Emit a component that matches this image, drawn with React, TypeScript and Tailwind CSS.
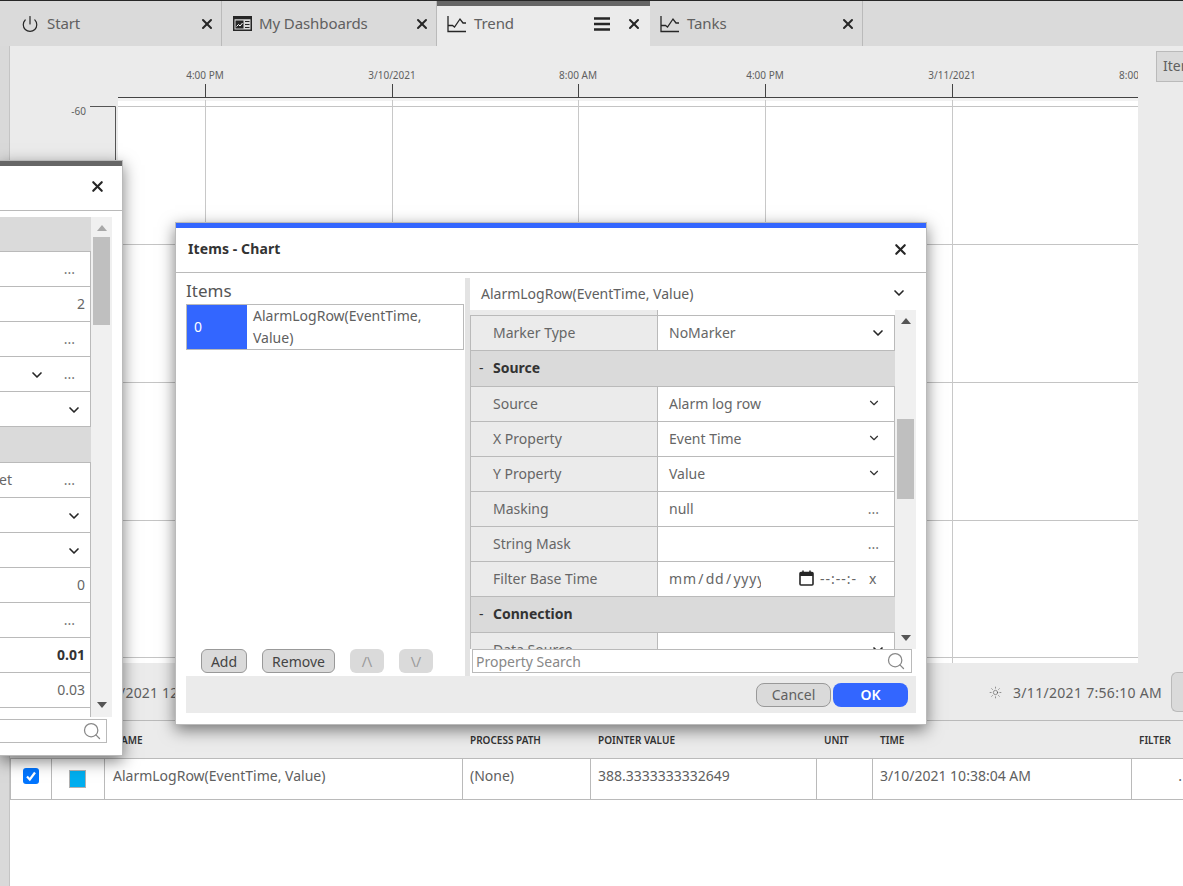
import { Power, X, ChevronDown, Search, Sun } from 'lucide-react';

const tabs = [
  { label: 'Start', icon: 'power', width: 'w-[222px]' },
  { label: 'My Dashboards', icon: 'dash', width: 'w-[215px]' },
  { label: 'Trend', icon: 'trend', width: 'w-[213px]', active: true },
  { label: 'Tanks', icon: 'trend', width: 'w-[213px]' },
];

const ticks = [
  { x: 205, label: '4:00 PM' },
  { x: 392, label: '3/10/2021' },
  { x: 578, label: '8:00 AM' },
  { x: 765, label: '4:00 PM' },
  { x: 952, label: '3/11/2021' },
  { x: 1138, label: '8:00 AM' },
];

const gridLines = [106, 244, 382, 520, 657];

const sidePanelRows = [
  { kind: 'section', height: 'h-[35px]' },
  { kind: 'dots' },
  { kind: 'text', value: '2' },
  { kind: 'dots' },
  { kind: 'chevronDots' },
  { kind: 'chevron' },
  { kind: 'section', height: 'h-[36px]' },
  { kind: 'dots', left: 'et' },
  { kind: 'chevron' },
  { kind: 'chevron' },
  { kind: 'text', value: '0' },
  { kind: 'dots' },
  { kind: 'bold', value: '0.01' },
  { kind: 'text', value: '0.03' },
  { kind: 'empty' },
];

function TrendIcon() {
  return (
    <svg width="20" height="18" viewBox="0 0 20 18" fill="none" stroke="#262626" strokeWidth="1.3">
      <path d="M1 1v15.500h18" />
      <path d="M1 10.500h4.500l2 1.500L13 4l3 4h3" />
    </svg>
  );
}

function DashIcon() {
  return (
    <svg width="19" height="15" viewBox="0 0 19 15" fill="none" stroke="#262626">
      <rect x="0.750" y="0.750" width="17.500" height="13.500" strokeWidth="1.500" />
      <rect x="0.750" y="0.750" width="17.500" height="2.500" fill="#262626" stroke="none" />
      <rect x="2.500" y="4.500" width="8" height="8" fill="#262626" stroke="none" />
      <path d="M3.500 10.500l2-2 1.500 1.500 2.500-3" stroke="#ffffff" strokeWidth="1" />
      <path d="M12 5.500h4.500M12 8.500h4.500M12 11.500h4.500" strokeWidth="1" />
    </svg>
  );
}

function TabBar() {
  return (
    <div className="h-[46px] flex bg-[#dadada] border-t border-[#262626] shrink-0">
      {tabs.map((tab) => (
        <div
          key={tab.label}
          className={`${tab.width} relative flex items-center pl-[20px] ${tab.active ? 'pr-[8px] bg-[#ebebeb]' : 'pr-[6px] border-r border-[#bababa]'}`}
        >
          {tab.active && <div className="absolute left-0 right-0 top-0 h-[5px] bg-[#666666]" />}
          <span className={`flex w-[20px] justify-center ${tab.icon === 'power' ? '' : '-ml-[10px]'} `}>
            {tab.icon === 'power' && <Power size={18} strokeWidth={1.6} color="#262626" />}
            {tab.icon === 'dash' && <DashIcon />}
            {tab.icon === 'trend' && <TrendIcon />}
          </span>
          <span className="ml-[7px] text-[15px] tracking-[-0.1px] text-[#606060] flex-1">{tab.label}</span>
          {tab.active && (
            <svg width="16" height="14" viewBox="0 0 16 14" className="mr-[16px]">
              <path d="M0 1.500h16M0 7h16M0 12.500h16" stroke="#262626" strokeWidth="2.400" />
            </svg>
          )}
          <X size={16} strokeWidth={3} color="#262626" />
        </div>
      ))}
    </div>
  );
}

function Chart() {
  return (
    <div className="flex-1 overflow-hidden">
      <svg width="1128" height="617" viewBox="10 46 1128 617">
        <rect x="118" y="100" width="1020" height="563" fill="#ffffff" />
        <rect x="118" y="98" width="1020" height="3" fill="#f2f2f2" />
        {gridLines.map((y) => (
          <line key={y} x1="118" x2="1138" y1={y + 0.5} y2={y + 0.5} stroke="#c4c4c4" />
        ))}
        {ticks.map((t) => (
          <g key={t.x}>
            <line x1={t.x + 0.5} x2={t.x + 0.5} y1="100" y2="663" stroke="#c8c8c8" />
            <line x1={t.x + 0.5} x2={t.x + 0.5} y1="84" y2="97" stroke="#444444" />
            <text x={t.x} y="79" textAnchor="middle" fontSize="10" fill="#606060">{t.label}</text>
          </g>
        ))}
        <line x1="118" x2="1138" y1="97.500" y2="97.500" stroke="#444444" />
        <path d="M90 106.500h25.500V663" fill="none" stroke="#555555" />
        <text x="86" y="115" textAnchor="end" fontSize="10" fill="#606060">-60</text>
      </svg>
    </div>
  );
}

function Toolbar() {
  return (
    <div className="h-[58px] shrink-0 flex items-center justify-between border-b border-[#bababa] pl-[80px] pt-[1px] text-[14px] text-[#606060]">
      <span className="tracking-[0.2px]">3/10/2021 12:00:00 AM</span>
      <div className="flex items-center">
        <Sun size={13} strokeWidth={1} color="#444444" />
        <span className="ml-[11px] tracking-[0.3px]">3/11/2021 7:56:10 AM</span>
        <div className="ml-[9px] w-[12px] h-[40px] border border-r-0 border-[#bababa] rounded-l-[6px] bg-[#dadada]" />
      </div>
    </div>
  );
}

function DataTable() {
  return (
    <div className="flex-1 flex flex-col bg-white">
      <div className="h-[38px] shrink-0 grid grid-cols-[41px_53px_358px_128px_226px_56px_259px_52px] items-center pt-[2px] bg-[#ebebeb] border-b border-[#bababa] text-[10px] font-semibold text-[#333333]">
        <span />
        <span />
        <span className="pl-[9px]">NAME</span>
        <span className="pl-[8px]">PROCESS PATH</span>
        <span className="pl-[8px]">POINTER VALUE</span>
        <span className="pl-[8px]">UNIT</span>
        <span className="pl-[8px]">TIME</span>
        <span className="pl-[8px]">FILTER</span>
      </div>
      <div className="h-[41px] shrink-0 grid grid-cols-[41px_53px_358px_128px_226px_56px_259px_52px] items-center border-b border-[#bababa] text-[14px] text-[#606060] border-l border-l-[#bababa]">
        <div className="h-full flex items-center justify-center border-r border-[#bababa]">
          <span className="w-[16px] h-[16px] -mt-[6px] rounded-[3px] bg-[#0075ff] flex items-center justify-center">
            <svg width="12" height="12" viewBox="0 0 12 12">
              <path d="M2 6.500L4.800 9.500L10 2.500" fill="none" stroke="#ffffff" strokeWidth="2.200" />
            </svg>
          </span>
        </div>
        <div className="h-full flex items-center justify-center border-r border-[#bababa]">
          <span className="w-[17px] h-[18px] -ml-[2px] bg-[#00aeef] border border-[#b0b0b0] -mt-[1px]" />
        </div>
        <div className="h-full flex items-center pl-[8px] pb-[7px] border-r border-[#bababa]">AlarmLogRow(EventTime, Value)</div>
        <div className="h-full flex items-center pl-[7px] pb-[7px] border-r border-[#bababa]">(None)</div>
        <div className="h-full flex items-center pl-[7px] pb-[7px] border-r border-[#bababa]">388.3333333332649</div>
        <div className="h-full border-r border-[#bababa]" />
        <div className="h-full flex items-center pl-[7px] pb-[7px] border-r border-[#bababa]">3/10/2021 10:38:04 AM</div>
        <div className="h-full flex items-center justify-end pb-[7px] pr-[2px]">.</div>
      </div>
    </div>
  );
}

function ScrollArrow({ down, light }: { down?: boolean; light?: boolean }) {
  return (
    <svg width="10" height="6" viewBox="0 0 10 6" className={down ? 'rotate-180' : ''}>
      <path d="M5 0l5 6H0z" fill={light ? '#a8a8a8' : '#555555'} />
    </svg>
  );
}

function Dots() {
  return <span className="text-[14px] text-[#777777] leading-none -mt-[2px]">...</span>;
}

function SidePanel() {
  return (
    <div className="absolute left-0 top-[160px] w-[123px] h-[596px] flex flex-col bg-white border-r border-b border-t border-[#bababa] shadow-[0_5px_15px_rgba(0,0,0,0.5)]">
      <div className="h-[5px] bg-[#666666] shrink-0" />
      <div className="h-[45px] shrink-0 flex items-center justify-end pr-[16px] border-b border-[#bababa]">
        <X size={17} strokeWidth={3} color="#262626" className="-mt-[4px]" />
      </div>
      <div className="h-[6px] shrink-0" />
      <div className="h-[500px] shrink-0 flex overflow-hidden">
        <div className="w-[91px] shrink-0">
          {sidePanelRows.map((row, i) =>
            row.kind === 'section' ? (
              <div key={i} className={`${row.height} bg-[#dadada] border-b border-[#bababa]`} />
            ) : (
              <div key={i} className="h-[35px] flex items-center justify-end pb-[2px] border-b border-r border-[#bababa] text-[14px] text-[#666666]">
                {row.left && <span className="mr-auto -ml-[1px]">{row.left}</span>}
                {row.kind === 'dots' && <span className="mr-[15px]"><Dots /></span>}
                {row.kind === 'text' && <span className="mr-[5px]">{row.value}</span>}
                {row.kind === 'bold' && <span className="mr-[5px] font-bold text-[#333333]">{row.value}</span>}
                {row.kind === 'chevron' && <ChevronDown size={16} strokeWidth={2.500} color="#262626" className="mr-[8px] mt-[4px]" />}
                {row.kind === 'chevronDots' && (
                  <>
                    <ChevronDown size={16} strokeWidth={2.500} color="#262626" className="mr-[19px] mt-[4px]" />
                    <span className="mr-[15px]"><Dots /></span>
                  </>
                )}
              </div>
            )
          )}
        </div>
        <div className="w-[21px] shrink-0 h-full bg-[#f0f0f0] flex flex-col items-center justify-between pt-[8px] pb-[9px] relative">
          <ScrollArrow light />
          <div className="absolute left-[2px] top-[20px] w-[17px] h-[88px] bg-[#bfbfbf]" />
          <ScrollArrow down />
        </div>
      </div>
      <div className="h-[24px] w-[107px] mt-[2px] shrink-0 flex items-center justify-end pr-[4px] border border-l-0 border-[#bababa]">
        <Search size={20} strokeWidth={1.500} color="#888888" />
      </div>
    </div>
  );
}

function PropRow({ label, children }: { label: string; children?: React.ReactNode }) {
  return (
    <div className="h-[35px] flex border-b border-[#bababa] text-[14px] text-[#666666]">
      <div className="w-[188px] shrink-0 bg-[#ebebeb] border-l border-r border-[#bababa] pl-[22px] pb-[2px] flex items-center">{label}</div>
      <div className="flex-1 bg-white border-r border-[#bababa] flex items-center justify-between pl-[11px] pr-[8px] pb-[2px]">{children}</div>
    </div>
  );
}

function SectionRow({ label }: { label: string }) {
  return (
    <div className="h-[36px] flex items-center pb-[2px] bg-[#dadada] border-b border-[#bababa] text-[14px] text-[#333333] border-l border-l-[#bababa]">
      <span className="w-[22px] pl-[8px] font-normal">-</span>
      <span className="font-bold">{label}</span>
    </div>
  );
}

function ItemsDialog() {
  return (
    <div className="absolute left-[175px] top-[222px] w-[752px] h-[503px] flex flex-col bg-white border border-[#bababa] shadow-[0_5px_15px_rgba(0,0,0,0.5)]">
      <div className="h-[5px] bg-[#3366ff] shrink-0" />
      <div className="h-[45px] shrink-0 flex items-center justify-between pl-[12px] pr-[17px] pb-[2px] border-b border-[#bababa]">
        <span className="text-[14px] font-bold text-[#333333] tracking-[0.1px] -mt-[2px]">Items - Chart</span>
        <X size={17} strokeWidth={3} color="#262626" />
      </div>
      <div className="h-[403px] shrink-0 flex pl-[10px]">
        {/* Items list */}
        <div className="w-[279px] shrink-0 flex flex-col">
          <div className="h-[31px] flex items-end pb-[3px] text-[17px] leading-[20px] text-[#555555]">Items</div>
          <div className="w-[278px] h-[46px] flex border border-[#bababa] text-[14px] text-[#606060]">
            <div className="w-[60px] shrink-0 bg-[#3366ff] text-white flex items-center pl-[7px] pb-[2px]">0</div>
            <div className="pl-[6px] leading-[22px]">
              AlarmLogRow(EventTime,
              <br />
              Value)
            </div>
          </div>
          <div className="mt-auto mb-[3px] ml-[15px] flex gap-[15px] text-[14px] text-[#444444]">
            <button className="w-[46px] h-[24px] rounded-[6px] border border-[#999999] bg-[#dadada]">Add</button>
            <button className="w-[73px] h-[24px] rounded-[6px] border border-[#999999] bg-[#dadada]">Remove</button>
            <button className="w-[34px] h-[24px] rounded-[6px] bg-[#dadada] text-[#999999]">/\</button>
            <button className="w-[34px] h-[24px] rounded-[6px] bg-[#dadada] text-[#999999]">\/</button>
          </div>
        </div>
        <div className="w-[5px] shrink-0 mt-[5px] bg-[#e3e3e3]" />
        {/* Property grid */}
        <div className="w-[446px] shrink-0 flex flex-col">
          <div className="h-[37px] shrink-0 flex items-center justify-between pl-[11px] pr-[9px] pt-[3px] text-[14px] text-[#606060]">
            <span>AlarmLogRow(EventTime, Value)</span>
            <ChevronDown size={16} strokeWidth={2.500} color="#262626" />
          </div>
          <div className="h-[339px] shrink-0 flex overflow-hidden">
            <div className="w-[425px] shrink-0">
              <div className="h-[6px] flex border-b border-[#bababa]">
                <div className="w-[188px] bg-[#ebebeb] border-r border-[#bababa]" />
              </div>
              <PropRow label="Marker Type">
                <span>NoMarker</span>
                <ChevronDown size={16} strokeWidth={2.500} color="#262626" className="mt-[2px]" />
              </PropRow>
              <SectionRow label="Source" />
              <PropRow label="Source">
                <span>Alarm log row</span>
                <ChevronDown size={14} strokeWidth={2} color="#333333" className="mr-[5px]" />
              </PropRow>
              <PropRow label="X Property">
                <span>Event Time</span>
                <ChevronDown size={14} strokeWidth={2} color="#333333" className="mr-[5px]" />
              </PropRow>
              <PropRow label="Y Property">
                <span>Value</span>
                <ChevronDown size={14} strokeWidth={2} color="#333333" className="mr-[5px]" />
              </PropRow>
              <PropRow label="Masking">
                <span>null</span>
                <span className="mr-[7px]"><Dots /></span>
              </PropRow>
              <PropRow label="String Mask">
                <span />
                <span className="mr-[7px]"><Dots /></span>
              </PropRow>
              <PropRow label="Filter Base Time">
                <div className="flex items-center w-full">
                  <span className="w-[92px] overflow-hidden whitespace-nowrap tracking-[0.8px] [word-spacing:-3px]">mm / dd / yyyy</span>
                  <svg width="15" height="16" viewBox="0 0 15 16" className="ml-[38px]" fill="none" stroke="#262626">
                    <rect x="1" y="2.500" width="13" height="12.500" rx="1" strokeWidth="1.600" />
                    <path d="M1 4.500h13" strokeWidth="3" />
                    <path d="M4 0.500v2M11 0.500v2" strokeWidth="1.500" />
                  </svg>
                  <span className="ml-[6px] text-[14px] tracking-[1px]">--:--:-</span>
                  <span className="ml-[12px]">x</span>
                </div>
              </PropRow>
              <SectionRow label="Connection" />
              <PropRow label="Data Source">
                <span />
                <ChevronDown size={16} strokeWidth={2.500} color="#262626" className="mt-[2px]" />
              </PropRow>
            </div>
            <div className="w-[21px] shrink-0 h-full bg-[#f0f0f0] flex flex-col items-center justify-between pt-[8px] pb-[8px] relative">
              <ScrollArrow />
              <div className="absolute left-[2px] top-[109px] w-[17px] h-[80px] bg-[#bfbfbf]" />
              <ScrollArrow down />
            </div>
          </div>
          <div className="h-[24px] w-[440px] ml-[2px] shrink-0 flex items-center justify-between pl-[3px] pr-[5px] border border-[#bababa] text-[14px] text-[#888888]">
            <span>Property Search</span>
            <Search size={20} strokeWidth={1.500} color="#888888" />
          </div>
        </div>
      </div>
      <div className="h-[37px] w-[730px] ml-[10px] shrink-0 bg-[#ebebeb] flex items-center justify-end pr-[8px] gap-[2px] text-[14px]">
        <button className="w-[75px] h-[24px] rounded-[8px] border border-[#999999] bg-[#dadada] text-[#606060]">Cancel</button>
        <button className="w-[75px] h-[24px] rounded-[8px] bg-[#3366ff] text-white font-semibold">OK</button>
      </div>
    </div>
  );
}

export default function App() {
  return (
    <div className="relative w-[1183px] h-[886px] overflow-hidden flex flex-col bg-white font-['Noto_Sans',sans-serif]">
      <TabBar />
      <div className="flex-1 flex min-h-0">
        <div className="w-[10px] shrink-0 bg-[#d9d9d9] border-r border-[#c4c4c4]" />
        <div className="flex-1 flex flex-col min-w-0 bg-[#ebebeb]">
          <div className="h-[617px] shrink-0 flex">
            <Chart />
            <div className="w-[45px] shrink-0 pt-[5px] pl-[18px] overflow-hidden">
              <div className="w-[40px] h-[31px] flex items-center pl-[6px] pb-[2px] bg-[#dadada] border border-[#bababa] text-[14px] text-[#606060]">Items</div>
            </div>
          </div>
          <Toolbar />
          <DataTable />
        </div>
      </div>
      <SidePanel />
      <ItemsDialog />
    </div>
  );
}
